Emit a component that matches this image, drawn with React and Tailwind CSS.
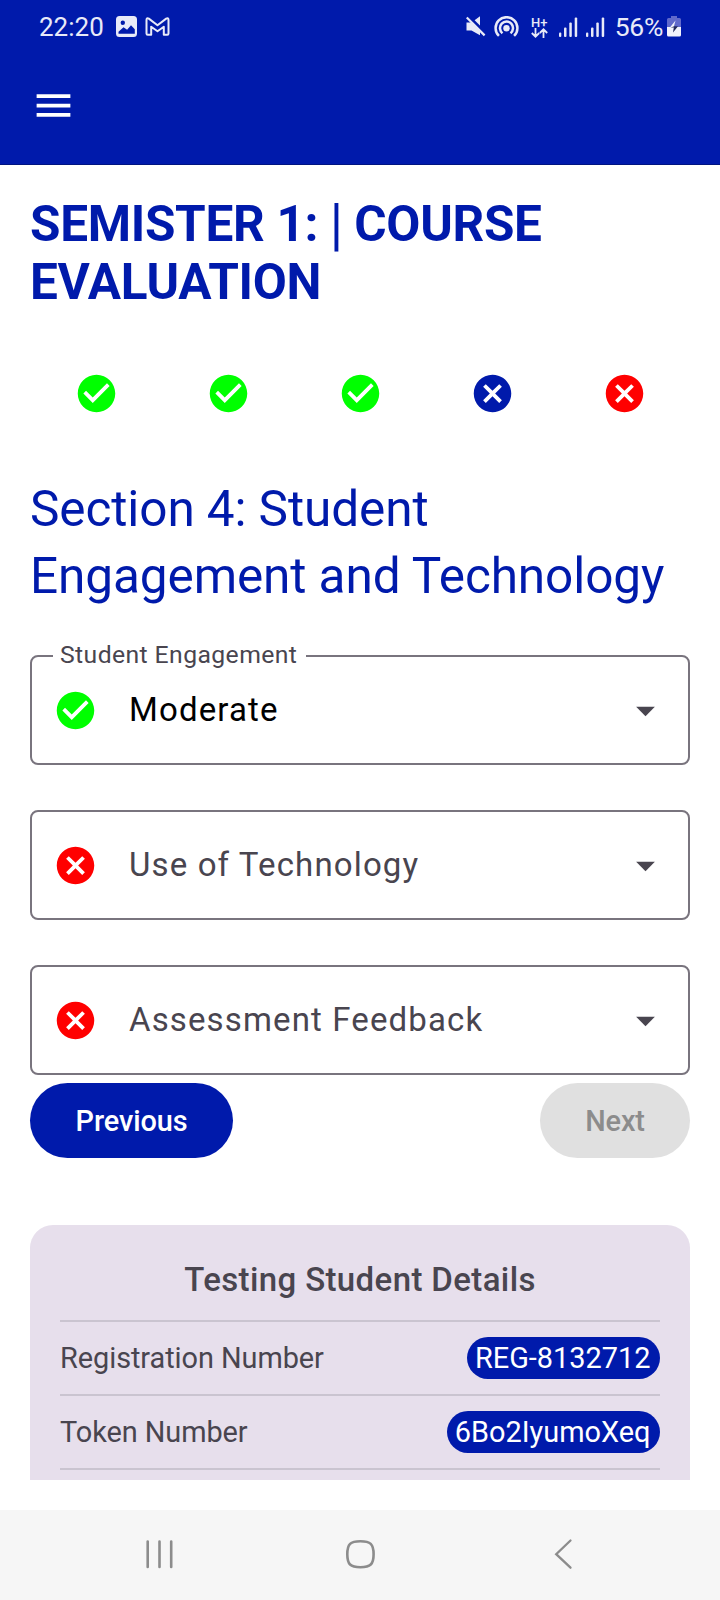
import React from "react";
import { MdCheckCircle, MdCancel, MdArrowDropDown, MdMenu } from "react-icons/md";

function StatusBar() {
  return (
    <div className="flex h-[54px] items-center justify-between pr-[39px] pl-[39px] text-[#e8eaf8]">
      <div className="flex items-center">
        <span className="w-[77px] text-[26px] leading-[30px]">22:20</span>
        <svg className="-mt-px h-[21px] w-[21px]" viewBox="0 0 21 21">
          <path
            fill="currentColor"
            fillRule="evenodd"
            d="M3.5 0h14A3.5 3.5 0 0 1 21 3.5v14a3.5 3.5 0 0 1-3.5 3.5h-14A3.5 3.5 0 0 1 0 17.5v-14A3.5 3.5 0 0 1 3.5 0zM6.8 4.5a2.2 2.2 0 1 0 0 4.4 2.2 2.2 0 0 0 0-4.4zM2.5 15.700v2h16.300v-4.500L15 9.200l-3.900 4.600-3.600-2.500z"
          />
        </svg>
        <svg className="-mt-[2px] ml-[8px] h-[19px] w-[25px]" viewBox="0 0 25 19" fill="none" stroke="currentColor" strokeWidth="2" strokeLinejoin="round">
          <path d="M1.500 16.500V3Q1.500.6 3.800 1.600l8.700 6.600 8.700-6.600Q23.500.600 23.500 3v13.500q0 1.200-1.200 1.200h-3.500V9.700L12.500 14.300 6.200 9.700v8H2.700q-1.200 0-1.200-1.200z" />
        </svg>
      </div>
      <div className="flex items-center">
        <svg className="-mt-px h-[21px] w-[20px]" viewBox="0 0 20 21">
          <path fill="currentColor" d="M0.500 6.500h5L14 .300v19L5.500 14.500h-5z" />
          <path d="M1.800 .300 19.800 18.200" stroke="#001aab" strokeWidth="4" />
          <path d="M.800 1.500 18.600 19.400" stroke="currentColor" strokeWidth="2.200" />
        </svg>
        <svg className="-mt-px ml-[8px] h-[21px] w-[25px]" viewBox="0 0 25 21" fill="none" stroke="currentColor" strokeWidth="2.500">
          <circle cx="12.500" cy="12.200" r="3.200" fill="currentColor" stroke="none" />
          <path d="M4.900 19.900a10.900 10.900 0 1 1 15.200 0" />
          <path d="M8.500 17.200a6.500 6.500 0 1 1 8 0" />
        </svg>
        <div className="ml-[12px] flex w-[17px] flex-col items-center">
          <span className="text-[13px] leading-[11px] font-medium">H+</span>
          <svg className="h-[10px] w-[17px]" viewBox="0 0 17 10" fill="none" stroke="currentColor" strokeWidth="1.800">
            <path d="M4.500 0v8.500M.800 5 4.500 8.700 8.200 5M12.500 10V1.500M8.800 5l3.700-3.700L16.200 5" />
          </svg>
        </div>
        <Signal className="-mt-px ml-[11px] h-[20px] w-[19px]" />
        <Signal className="-mt-px ml-[8px] h-[20px] w-[19px]" />
        <span className="ml-[10px] text-[26.5px] leading-[30px] tracking-[-0.3px]">56%</span>
        <svg className="-mt-px ml-[4px] h-[21px] w-[14px]" viewBox="0 0 14 21">
          <path fill="#6069cb" d="M4 0h6v2h2.500A1.500 1.500 0 0 1 14 3.500V12H0V3.500A1.500 1.500 0 0 1 1.500 2H4z" />
          <path fill="#f2f3fc" d="M0 11h14v8a1.500 1.500 0 0 1-1.500 1.500h-11A1.500 1.500 0 0 1 0 19z" />
          <path fill="#f2f3fc" d="M8.500 4.500 2.500 12h4z" />
          <path fill="#222a5c" d="M3.500 11.500h3.300L6 16.500l5-6.300H7.500z" />
        </svg>
      </div>
    </div>
  );
}

function Signal({ className }) {
  return (
    <svg className={className} viewBox="0 0 19 20" fill="currentColor">
      <rect x="0" y="15.500" width="2.300" height="4.500" rx="1" />
      <rect x="5" y="10.500" width="2.500" height="9.500" rx="1" />
      <rect x="10.300" y="5.500" width="2.500" height="14.500" rx="1" />
      <rect x="15.700" y="0.500" width="2.500" height="19.500" rx="1" />
    </svg>
  );
}

const steps = ["done", "done", "done", "current", "todo"];

function StepIcon({ state }) {
  if (state === "done") return <MdCheckCircle className="size-[45px] text-[#00ff00]" />;
  if (state === "current") return <MdCancel className="size-[45px] text-[#001aab]" />;
  return <MdCancel className="size-[45px] text-[#ff0000]" />;
}

function SelectField({ label, value }) {
  return (
    <div className="relative flex h-[110px] items-center rounded-[8px] border-2 border-[#79747e] pr-[20px] pl-[21px]">
      {value && (
        <span className="absolute -top-[17px] left-[21px] bg-white pr-[9px] pl-[7px] text-[24.75px] leading-[30px] tracking-[0.4px] whitespace-nowrap text-[#49454f]">
          {label}
        </span>
      )}
      <StepIcon state={value ? "done" : "todo"} />
      <span className={`ml-[31px] flex-1 text-[33px] leading-[48px] tracking-[1.13px] ${value ? "text-black" : "text-[#49454f]"}`}>
        {value || label}
      </span>
      <MdArrowDropDown className="size-[45px] text-[#49454f]" />
    </div>
  );
}

function DetailRow({ label, value }) {
  return (
    <div className="flex h-[74px] items-center justify-between border-b-2 border-[#cac4d0] text-[28.9px] leading-[42px]">
      <span className="tracking-[-0.06px] text-[#49454f]">{label}</span>
      <span className="h-[42px] rounded-[21px] bg-[#001aab] pr-[9.5px] pl-[8px] text-white">{value}</span>
    </div>
  );
}

export default function App() {
  return (
    <div className="flex h-[1600px] w-[720px] flex-col overflow-hidden bg-white font-['Roboto',sans-serif]">
      <header className="h-[165px] shrink-0 border-b border-[#001480] bg-[#001aab]">
        <StatusBar />
        <MdMenu className="mt-[29px] ml-[31px] size-[45px] text-white" />
      </header>

      <main className="h-[1315px] shrink-0 overflow-hidden px-[30px] pt-[30px]">
        <h1 className="text-[49.5px] leading-[58px] font-bold tracking-[-0.3px] text-[#001aab]">
          SEMISTER 1: <span className="inline-block scale-y-115 font-medium">|</span> COURSE
          <br />
          EVALUATION
        </h1>

        <div className="mt-[60px] grid h-[45px] grid-cols-5 justify-items-center">
          {steps.map((s, i) => (
            <StepIcon key={i} state={s} />
          ))}
        </div>

        <h2 className="mt-[60px] text-[49.5px] leading-[67px] tracking-[-0.1px] text-[#001aab]">
          Section 4: Student
          <br />
          Engagement and Technology
        </h2>

        <div className="mt-[45px] flex flex-col gap-[45px]">
          <SelectField label="Student Engagement" value="Moderate" />
          <SelectField label="Use of Technology" />
          <SelectField label="Assessment Feedback" />
        </div>

        <div className="mt-[8px] flex h-[75px] justify-between text-[28.9px] font-medium tracking-[-0.1px]">
          <button className="w-[203px] rounded-full bg-[#001aab] pt-[2px] text-white">Previous</button>
          <button className="w-[150px] rounded-full bg-[#e0e0e0] pt-[2px] text-[#8c8c8c]" disabled>
            Next
          </button>
        </div>

        <section className="mt-[67px] h-[300px] rounded-t-[23px] bg-[#e7dfec] px-[30px]">
          <h3 className="h-[97px] border-b-2 border-[#cac4d0] pt-[30px] text-center text-[33px] leading-[50px] font-medium tracking-[0.38px] text-[#49454f]">
            Testing Student Details
          </h3>
          <DetailRow label="Registration Number" value="REG-8132712" />
          <DetailRow label="Token Number" value="6Bo2IyumoXeq" />
        </section>
      </main>

      <nav className="mt-[30px] flex h-[90px] shrink-0 items-center bg-[#f6f6f6] pb-[3px] text-[#8c8c8c]">
        <svg className="ml-[144px] h-[32px] w-[32px]" viewBox="0 0 32 32" stroke="currentColor" strokeWidth="2.600" strokeLinecap="round">
          <path d="M3.700 3.500v25.500M15.500 3.500v25.500M27.200 3.500v25.500" />
        </svg>
        <svg className="ml-[168px] h-[32px] w-[32px]" viewBox="0 0 32 32" fill="none" stroke="currentColor" strokeWidth="2.600">
          <path d="M16.400 3.200c10 0 13.200 2.800 13.200 13s-3.200 13-13.200 13-13.100-2.800-13.100-13 3.100-13 13.100-13z" />
        </svg>
        <svg className="ml-[174px] h-[32px] w-[26px]" viewBox="0 0 26 32" fill="none" stroke="currentColor" strokeWidth="2.300" strokeLinecap="round">
          <path d="M20.500 2.500 6.200 16.200l14.300 13.500" />
        </svg>
      </nav>
    </div>
  );
}
